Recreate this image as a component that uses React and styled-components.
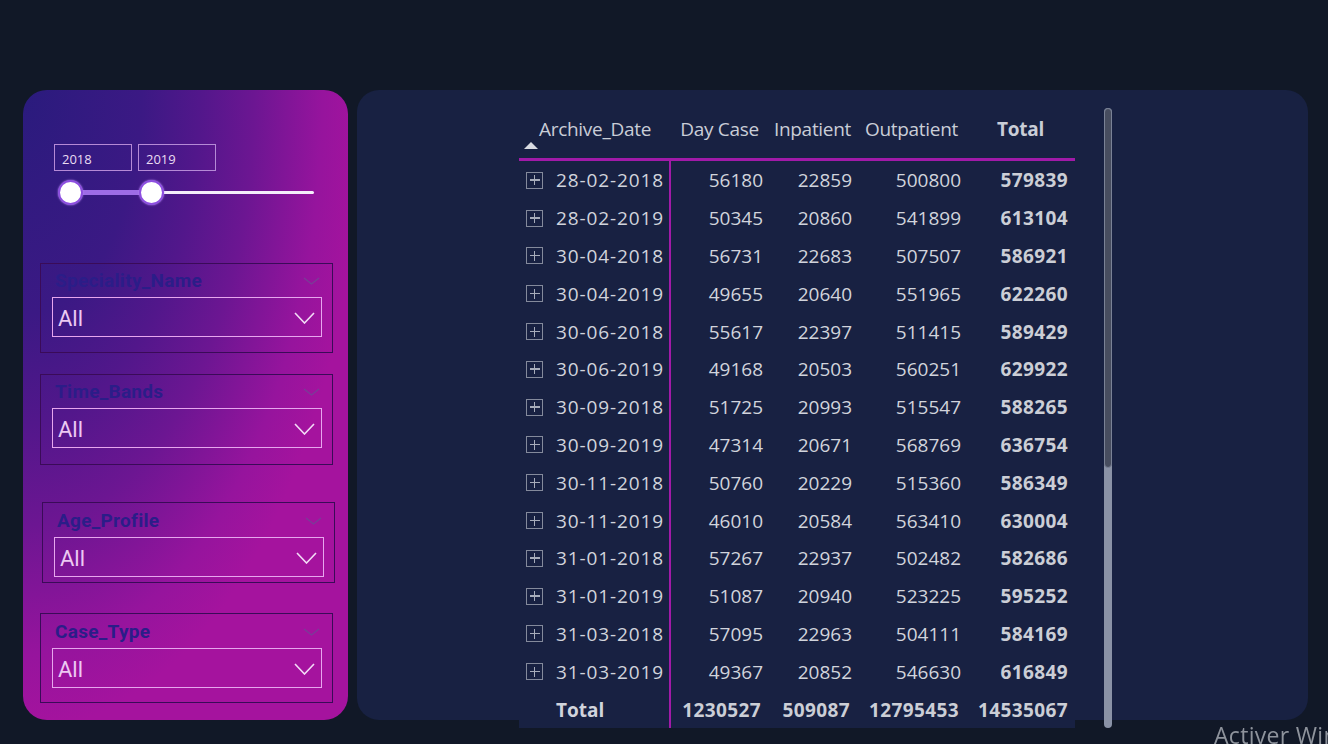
import React from "react";
import styled, { createGlobalStyle } from "styled-components";

const rows = [
  ["28-02-2018", 56180, 22859, 500800, 579839],
  ["28-02-2019", 50345, 20860, 541899, 613104],
  ["30-04-2018", 56731, 22683, 507507, 586921],
  ["30-04-2019", 49655, 20640, 551965, 622260],
  ["30-06-2018", 55617, 22397, 511415, 589429],
  ["30-06-2019", 49168, 20503, 560251, 629922],
  ["30-09-2018", 51725, 20993, 515547, 588265],
  ["30-09-2019", 47314, 20671, 568769, 636754],
  ["30-11-2018", 50760, 20229, 515360, 586349],
  ["30-11-2019", 46010, 20584, 563410, 630004],
  ["31-01-2018", 57267, 22937, 502482, 582686],
  ["31-01-2019", 51087, 20940, 523225, 595252],
  ["31-03-2018", 57095, 22963, 504111, 584169],
  ["31-03-2019", 49367, 20852, 546630, 616849],
];

const slicers = [
  { name: "Speciality_Name", top: 57, left: 17, h: 90, pad: 15 },
  { name: "Time_Bands", top: 21, left: 17, h: 91, pad: 16 },
  { name: "Age_Profile", top: 37, left: 19, h: 81, pad: 5 },
  { name: "Case_Type", top: 30, left: 17, h: 90, pad: 14 },
];

const Global = createGlobalStyle`
  body {
    margin: 0;
    background: #111827;
    font-family: "Open Sans", "Liberation Sans", sans-serif;
    overflow: hidden;
  }
`;

const Page = styled.div`
  display: flex;
  gap: 9px;
  padding: 90px 0 0 23px;
  height: 744px;
  box-sizing: border-box;
`;

const FilterPanel = styled.aside`
  width: 325px;
  height: 630px;
  border-radius: 24px;
  background: radial-gradient(
    340px 640px at 0 0,
    #2a1b7d 0%,
    #3b1984 35%,
    #52178b 52%,
    #6c1692 68%,
    #96149d 88%,
    #a5139e 100%
  );
  display: flex;
  flex-direction: column;
  flex-shrink: 0;
`;

const DateRow = styled.div`
  display: flex;
  gap: 6px;
  margin: 54px 0 0 31px;
`;

const DateBox = styled.div`
  width: 78px;
  height: 27px;
  box-sizing: border-box;
  border: 1px solid #b58ad6;
  color: #eadcf2;
  font-size: 13px;
  padding: 5px 0 0 7px;
`;

const Slider = styled.div`
  position: relative;
  margin: 9px 0 0 35px;
  width: 256px;
  height: 26px;
`;

const Track = styled.div`
  position: absolute;
  left: 13px;
  right: 0;
  top: 11px;
  height: 3px;
  border-radius: 2px;
  background: #f4eefa;
`;

const TrackFill = styled.div`
  position: absolute;
  left: 13px;
  width: 81px;
  top: 10px;
  height: 5px;
  background: #9d6ce6;
`;

const Handle = styled.div`
  position: absolute;
  top: 0;
  left: ${(p) => p.$x}px;
  width: 25px;
  height: 25px;
  box-sizing: border-box;
  border-radius: 50%;
  background: #ffffff;
  border: 2px solid #8d4fe0;
  box-shadow: 0 0 2px #b98cf0;
`;

const Slicer = styled.div`
  width: 293px;
  height: ${(p) => p.$h}px;
  box-sizing: border-box;
  margin: ${(p) => p.$top}px 0 0 ${(p) => p.$left}px;
  border: 1px solid #3a0b58;
  display: flex;
  flex-direction: column;
  justify-content: flex-end;
  padding: 0 10px ${(p) => p.$pad}px 11px;
`;

const SlicerHead = styled.div`
  display: flex;
  justify-content: space-between;
  align-items: center;
  padding: 0 2px 5px 3px;
`;

const SlicerTitle = styled.div`
  font-family: "Roboto", "Liberation Sans", sans-serif;
  font-weight: 700;
  font-size: 19px;
  letter-spacing: 0.3px;
  color: #2b1d88;
`;

const Dropdown = styled.div`
  height: 40px;
  box-sizing: border-box;
  border: 1.5px solid #e7a6ee;
  display: flex;
  align-items: center;
  justify-content: space-between;
  padding: 2px 6px 0 5px;
  font-family: "Roboto", "Liberation Sans", sans-serif;
  font-size: 22px;
  color: #ecc9f2;
`;

const Main = styled.main`
  width: 951px;
  height: 630px;
  border-radius: 22px;
  background: #182142;
  display: flex;
  gap: 29px;
  padding: 18px 0 0 162px;
  box-sizing: border-box;
  flex-shrink: 0;
  align-items: flex-start;
`;

const Table = styled.div`
  display: grid;
  grid-template-columns: 152px 97px 89px 109px 109px;
  grid-template-rows: 53px;
  grid-auto-rows: 37.8px;
  background: #182142;
  color: #d1d4dc;
  font-size: 19px;
`;

const HeadCell = styled.div`
  position: relative;
  box-sizing: border-box;
  border-bottom: 3px solid #a11aa8;
  display: flex;
  justify-content: center;
  padding-top: 8px;
  font-weight: ${(p) => (p.$bold ? 700 : 400)};
  color: #c9cdd7;
  white-space: nowrap;
  letter-spacing: -0.3px;
`;

const SortArrow = styled.div`
  position: absolute;
  left: 5px;
  bottom: 9px;
  width: 0;
  height: 0;
  border-left: 7px solid transparent;
  border-right: 7px solid transparent;
  border-bottom: 7px solid #d8dbe2;
`;

const DateCell = styled.div`
  display: flex;
  align-items: center;
  gap: 13px;
  padding: 1px 0 0 7px;
  border-right: 2px solid #a11aa8;
  font-weight: ${(p) => (p.$bold ? 700 : 400)};
  letter-spacing: ${(p) => (p.$bold ? "0" : "0.9px")};
  white-space: nowrap;
`;

const Expand = styled.div`
  width: 17px;
  height: 17px;
  box-sizing: border-box;
  border: 1.3px solid #848a9c;
  position: relative;
  flex-shrink: 0;
  visibility: ${(p) => (p.$hidden ? "hidden" : "visible")};
  &::before,
  &::after {
    content: "";
    position: absolute;
    background: #a7acba;
  }
  &::before {
    left: 2.5px;
    right: 2.5px;
    top: 6.5px;
    height: 1.4px;
  }
  &::after {
    top: 2.5px;
    bottom: 2.5px;
    left: 6.5px;
    width: 1.4px;
  }
`;

const NumCell = styled.div`
  display: flex;
  align-items: center;
  justify-content: flex-end;
  padding: 1px ${(p) => (p.$bold ? 7 : 5)}px 0 0;
  font-weight: ${(p) => (p.$bold ? 700 : 400)};
  letter-spacing: ${(p) => (p.$bold ? "0.4px" : "0")};
  color: ${(p) => (p.$bold ? "#cbced6" : "#d1d4dc")};
`;

const ScrollTrack = styled.div`
  width: 8px;
  height: 620px;
  border-radius: 4px;
  background: #8a92a6;
  flex-shrink: 0;
`;

const ScrollThumb = styled.div`
  height: 360px;
  box-sizing: border-box;
  border: 1px solid #7a8296;
  border-radius: 4px;
  background: #474d5f;
`;

const Watermark = styled.div`
  position: fixed;
  left: 1214px;
  top: 719px;
  font-family: "Open Sans", sans-serif;
  font-size: 23px;
  letter-spacing: 0.3px;
  color: #8e939c;
  white-space: nowrap;
`;

const Chevron = ({ w, h, color, sw }) => (
  <svg width={w} height={h} viewBox={`0 0 ${w} ${h}`}>
    <polyline
      points={`1,1 ${w / 2},${h - 1} ${w - 1},1`}
      fill="none"
      stroke={color}
      strokeWidth={sw}
    />
  </svg>
);

export default function App() {
  const totals = [1230527, 509087, 12795453, 14535067];
  return (
    <>
      <Global />
      <Page>
        <FilterPanel>
          <DateRow>
            <DateBox>2018</DateBox>
            <DateBox>2019</DateBox>
          </DateRow>
          <Slider>
            <Track />
            <TrackFill />
            <Handle $x={0} />
            <Handle $x={81} />
          </Slider>
          {slicers.map((s) => (
            <Slicer key={s.name} $top={s.top} $left={s.left} $h={s.h} $pad={s.pad}>
              <SlicerHead>
                <SlicerTitle>{s.name}</SlicerTitle>
                <Chevron w={17} h={8} color="#7a3d98" sw={1.3} />
              </SlicerHead>
              <Dropdown>
                <span>All</span>
                <Chevron w={21} h={12} color="#f2dbf6" sw={1.6} />
              </Dropdown>
            </Slicer>
          ))}
        </FilterPanel>
        <Main>
          <Table>
            <HeadCell>
              Archive_Date
              <SortArrow />
            </HeadCell>
            <HeadCell>Day Case</HeadCell>
            <HeadCell>Inpatient</HeadCell>
            <HeadCell>Outpatient</HeadCell>
            <HeadCell $bold>Total</HeadCell>
            {rows.map((r) => (
              <React.Fragment key={r[0]}>
                <DateCell>
                  <Expand />
                  {r[0]}
                </DateCell>
                <NumCell>{r[1]}</NumCell>
                <NumCell>{r[2]}</NumCell>
                <NumCell>{r[3]}</NumCell>
                <NumCell $bold>{r[4]}</NumCell>
              </React.Fragment>
            ))}
            <DateCell $bold>
              <Expand $hidden />
              Total
            </DateCell>
            {totals.map((t) => (
              <NumCell key={t} $bold>
                {t}
              </NumCell>
            ))}
          </Table>
          <ScrollTrack>
            <ScrollThumb />
          </ScrollTrack>
        </Main>
      </Page>
      <Watermark>Activer Windows</Watermark>
    </>
  );
}
